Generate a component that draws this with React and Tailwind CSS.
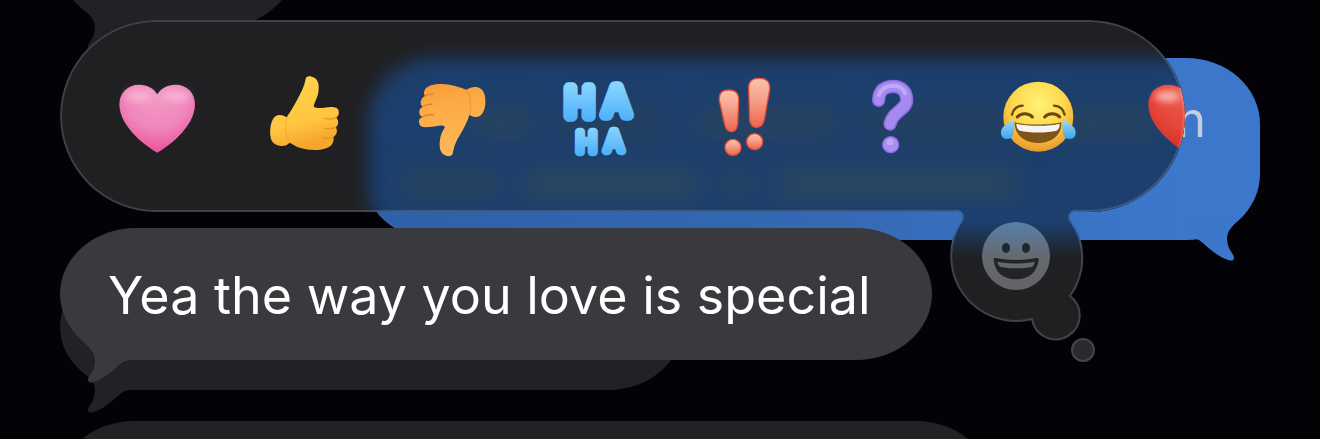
const fontStack = "font-['Inter','Liberation_Sans',sans-serif]"

const Tail = ({ className }) => (
  <svg viewBox="0 0 72 60" className={`absolute h-[60px] w-[72px] ${className}`} aria-hidden="true">
    <path
      fill="currentColor"
      d="M24 18C27 22 31 25 33 29C36 34 35 41 33 46C31 50 28 53 28 56C28 59 31 59 34 58C43 55 50 49 58 42C62 38 66 36 72 36V14H28Z"
    />
  </svg>
)

const DimBubble = ({ className }) => (
  <div className={`relative h-[126px] max-w-full shrink-0 rounded-[74px/63px] bg-[#222125] text-[#222125] ${className}`}>
    <Tail className="-bottom-6 left-0" />
  </div>
)

const Conversation = () => (
  <div className="absolute inset-0 flex flex-col overflow-hidden px-[60px]" aria-hidden="true">
    <DimBubble className="-mt-[99px] w-[235px]" />
    <div className="relative mt-[31px] h-[182px] w-[897px] max-w-full shrink-0 self-end rounded-[74px/66px] bg-linear-to-r from-[#2f62a9] from-10% via-[#3568b4] to-[#3c77cc] to-90% text-[#3c77cc]">
      <p className="px-[54px] pt-8 text-right text-[49px] leading-[60px] text-[#c3cde0]">n</p>
      <Tail className="-right-0.5 -bottom-[22px] -scale-x-100" />
    </div>
    <DimBubble className="mt-6 w-[622px]" />
    <DimBubble className="mt-[31px] w-[930px]" />
  </div>
)

const Heart = ({ id, light, mid, dark, shine }) => (
  <svg viewBox="210 225 225 246" className="size-full overflow-visible" aria-hidden="true">
    <defs>
      <radialGradient id={id} gradientUnits="userSpaceOnUse" cx="322" cy="290" r="175">
        <stop offset="0" stopColor={light} />
        <stop offset="0.55" stopColor={mid} />
        <stop offset="1" stopColor={dark} />
      </radialGradient>
      <filter id={`${id}-soft`} x="-50%" y="-80%" width="200%" height="260%">
        <feGaussianBlur stdDeviation="11" />
      </filter>
    </defs>
    <path
      fill={`url(#${id})`}
      d="M322 458C300 447 208 385 208 313C208 278 234 254 267 254C292 254 312 266 322 283C332 266 352 254 377 254C410 254 435 278 435 313C435 385 344 447 322 458Z"
    />
    <ellipse cx="266" cy="289" rx="38" ry="17" fill={shine} filter={`url(#${id}-soft)`} />
    <ellipse cx="378" cy="289" rx="38" ry="17" fill={shine} filter={`url(#${id}-soft)`} />
  </svg>
)

const ThumbUp = () => (
  <svg viewBox="50 30 225 246" className="size-full overflow-visible" aria-hidden="true">
    <defs>
      <linearGradient id="up" x1="0" y1="0" x2="0.25" y2="1">
        <stop offset="0" stopColor="#ffd34b" />
        <stop offset="0.7" stopColor="#ffc640" />
        <stop offset="1" stopColor="#f5a62d" />
      </linearGradient>
    </defs>
    <path
      fill="url(#up)"
      d="M166 41C169 30 183 33 192 38C205 46 207 62 204 82C201 101 192 111 190 125C196 130 210 129 222 128C238 126 262 123 265 138C267 148 264 154 257 158C267 165 265 182 256 187C263 195 260 211 249 216C253 229 245 243 231 248C212 257 176 257 151 249C137 245 127 238 118 233C111 241 97 246 82 241C60 236 58 210 60 190C63 164 72 151 87 150C98 150 104 154 109 157C121 140 132 121 143 100C153 81 163 61 166 41Z"
    />
    <g fill="none" stroke="#df8b1f" strokeWidth="4" strokeLinecap="round" opacity="0.75">
      <path d="M224 160C236 163 250 162 258 157" />
      <path d="M222 190C236 192 248 191 256 187" />
      <path d="M219 218C230 221 241 220 249 216" />
      <path d="M109 158C103 180 105 211 118 232" opacity="0.4" />
    </g>
  </svg>
)

const ThumbDown = () => (
  <svg viewBox="162 105 225 246" className="size-full overflow-visible" aria-hidden="true">
    <defs>
      <linearGradient id="down" x1="0" y1="0" x2="0.2" y2="1">
        <stop offset="0" stopColor="#f79a35" />
        <stop offset="0.3" stopColor="#fba945" />
        <stop offset="1" stopColor="#ffb755" />
      </linearGradient>
    </defs>
    <path
      fill="url(#down)"
      d="M194 151C200 136 222 132 244 132C272 133 294 140 319 149C330 142 348 137 360 145C375 154 377 174 376 191C374 213 366 230 347 231C339 231 332 227 328 225C322 245 310 269 298 288C283 312 282 325 278 341C274 352 258 349 249 342C237 333 237 309 242 289C245 275 252 269 255 260C244 252 231 259 216 260C199 262 181 264 178 251C175 240 179 234 188 231C174 226 174 206 188 201C178 193 181 174 195 168C191 162 191 156 194 151Z"
    />
    <g fill="none" stroke="#d97b24" strokeWidth="4" strokeLinecap="round" opacity="0.8">
      <path d="M195 168C202 164 210 161 219 162" />
      <path d="M188 200C196 194 206 192 216 193" />
      <path d="M187 231C196 225 208 223 220 225" />
      <path d="M320 150C331 166 336 202 328 224" opacity="0.4" />
    </g>
  </svg>
)

const HaHa = () => (
  <svg viewBox="603 105 225 246" className={`size-full overflow-visible ${fontStack}`} aria-hidden="true">
    <defs>
      <linearGradient id="haha-top" gradientUnits="userSpaceOnUse" x1="0" y1="122" x2="0" y2="248">
        <stop offset="0" stopColor="#8ed8ff" />
        <stop offset="1" stopColor="#4aaefb" />
      </linearGradient>
      <linearGradient id="haha-low" gradientUnits="userSpaceOnUse" x1="0" y1="252" x2="0" y2="348">
        <stop offset="0" stopColor="#8ed8ff" />
        <stop offset="1" stopColor="#4aaefb" />
      </linearGradient>
    </defs>
    <g textAnchor="middle" fontWeight="300" strokeLinejoin="round" strokeLinecap="round">
      <g fill="url(#haha-top)" stroke="url(#haha-top)" strokeWidth="35" fontSize="114">
        <text x="659" y="227">H</text>
        <text x="770" y="224">A</text>
      </g>
      <g fill="url(#haha-low)" stroke="url(#haha-low)" strokeWidth="25" fontSize="80">
        <text x="679" y="335">H</text>
        <text x="762" y="334">A</text>
      </g>
    </g>
  </svg>
)

const Exclaim = () => (
  <svg viewBox="144 105 225 246" className="size-full overflow-visible" aria-hidden="true">
    <defs>
      <linearGradient id="bang" x1="0" y1="0" x2="0" y2="1">
        <stop offset="0" stopColor="#fbc3ad" />
        <stop offset="0.4" stopColor="#f5a48e" />
        <stop offset="1" stopColor="#f0654c" />
      </linearGradient>
    </defs>
    <g fill="url(#bang)" stroke="#e34f3b" strokeWidth="4">
      <path d="M178 182C176 160 186 150 206 150C228 150 237 161 236 183L233 250C231 268 225 275 215 275C204 275 197 268 194 252Z" />
      <path d="M266 147C265 124 276 115 298 115C322 115 331 128 329 149L313 238C309 255 302 262 290 262C277 262 271 254 269 239Z" />
      <circle cx="219" cy="322" r="24" />
      <circle cx="284" cy="305" r="24" />
    </g>
  </svg>
)

const Question = () => (
  <svg viewBox="585 105 225 246" className="size-full overflow-visible" aria-hidden="true">
    <g fill="none" strokeLinecap="round">
      <path stroke="#8b6be3" strokeWidth="40" d="M656 181C656 150 675 139 700 139C725 139 740 155 740 180C740 210 697 214 690 252" />
      <path stroke="#a58bf0" strokeWidth="31" d="M656 181C656 150 675 139 700 139C725 139 740 155 740 180C740 210 697 214 690 252" />
      <path stroke="#cbb6fb" strokeWidth="12" d="M657 165C664 142 680 137 700 137C718 137 730 145 735 160" opacity="0.7" />
    </g>
    <circle cx="692" cy="314" r="24" fill="#aa8ff2" stroke="#8b6be3" strokeWidth="4" />
    <circle cx="690" cy="306" r="10" fill="#c9b5fb" opacity="0.7" />
  </svg>
)

const Joy = () => (
  <svg viewBox="186 105 225 246" className="size-full overflow-visible" aria-hidden="true">
    <defs>
      <radialGradient id="joy" cx="0.5" cy="0.32" r="0.68">
        <stop offset="0" stopColor="#fff279" />
        <stop offset="0.55" stopColor="#fcd84b" />
        <stop offset="0.85" stopColor="#f2ad37" />
        <stop offset="1" stopColor="#e69a2e" />
      </radialGradient>
      <linearGradient id="tear" x1="0" y1="0" x2="0" y2="1">
        <stop offset="0" stopColor="#a3dcf5" />
        <stop offset="1" stopColor="#3ba4e8" />
      </linearGradient>
    </defs>
    <circle cx="295" cy="230" r="105" fill="url(#joy)" />
    <g fill="none" stroke="#6f4514" strokeWidth="7" strokeLinecap="round">
      <path d="M216 224C220 207 232 198 248 197" />
      <path d="M342 197C358 198 370 207 374 224" />
      <path d="M232 231C243 218 266 218 277 231" strokeWidth="9" />
      <path d="M314 231C325 218 348 218 359 231" strokeWidth="9" />
    </g>
    <path fill="#7f5418" d="M224 247C260 256 330 256 364 247C366 284 337 309 294 309C252 309 223 284 224 247Z" />
    <path fill="#f4f4f4" d="M229 251C264 259 326 259 359 251C360 261 356 268 350 272C320 279 270 279 239 272C232 268 229 260 229 251Z" />
    <g fill="url(#tear)">
      <path d="M220 237C206 248 184 258 183 277C182 290 191 298 203 297C216 296 221 286 222 272C223 258 223 246 220 237Z" />
      <path d="M370 237C384 248 406 258 407 277C408 290 399 298 387 297C374 296 369 286 368 272C367 258 367 246 370 237Z" />
    </g>
  </svg>
)

const reactions = [
  {
    name: 'Love',
    icon: <Heart id="pink" light="#f39ac6" mid="#f086bd" dark="#ec4b92" shine="#f7b2d2" />,
  },
  { name: 'Like', icon: <ThumbUp /> },
  { name: 'Dislike', icon: <ThumbDown /> },
  { name: 'Laugh', icon: <HaHa /> },
  { name: 'Emphasize', icon: <Exclaim /> },
  { name: 'Question', icon: <Question /> },
  { name: 'Tears of joy', icon: <Joy /> },
  {
    name: 'Red heart',
    icon: <Heart id="red" light="#ec5a4c" mid="#e5453b" dark="#cf2a24" shine="#f8b3ac" />,
  },
]

// The small thought bubble that hangs below the bar and opens the emoji keyboard
const MoreEmoji = () => (
  <div className="absolute top-[188px] right-[85px] h-40 w-[155px]">
    <svg viewBox="0 0 155 160" className="size-full" aria-hidden="true">
      <defs>
        <linearGradient id="glass" gradientUnits="userSpaceOnUse" x1="0" y1="14" x2="0" y2="50">
          <stop offset="0" stopColor="#1c3f6d" />
          <stop offset="1" stopColor="#202022" />
        </linearGradient>
        <linearGradient id="rim" gradientUnits="userSpaceOnUse" x1="0" y1="20" x2="0" y2="44">
          <stop offset="0" stopColor="#3467a8" />
          <stop offset="1" stopColor="#434346" />
        </linearGradient>
      </defs>
      <path
        fill="url(#glass)"
        d="M11 3C16 3 19 6 17 12A65 65 0 0 0 87 111A24 24 0 1 0 125 88A65 65 0 0 0 125 12C123 7 126 3 131 3V0H11Z"
      />
      <path
        fill="none"
        stroke="url(#rim)"
        strokeWidth="2"
        d="M11 3C16 3 19 6 17 12A65 65 0 0 0 87 111A24 24 0 1 0 125 88A65 65 0 0 0 125 12C123 7 126 3 131 3"
      />
      <circle cx="138" cy="142" r="11" fill="#2a2a2c" stroke="#454548" strokeWidth="2" />
    </svg>
    <button type="button" aria-label="More emoji" className="absolute top-3.5 left-[37px] size-[68px] rounded-full">
      <svg viewBox="0 0 204 204" className="size-full" aria-hidden="true">
        <defs>
          <linearGradient id="face" x1="0" y1="0" x2="0" y2="1">
            <stop offset="0" stopColor="#567fac" />
            <stop offset="0.5" stopColor="#656a70" />
            <stop offset="1" stopColor="#636365" />
          </linearGradient>
        </defs>
        <circle cx="102" cy="102" r="102" fill="url(#face)" />
        <ellipse cx="72" cy="78" rx="12" ry="15" fill="#20262e" />
        <ellipse cx="132" cy="78" rx="12" ry="15" fill="#20262e" />
        <path fill="#232427" d="M35 113C34 108 37 107 42 108C78 116 126 116 162 108C168 107 171 109 170 114C166 150 140 172 102 172C64 172 38 150 35 113Z" />
        <path fill="#67686a" d="M47 119C80 126 124 126 158 119C157 127 154 132 150 134C120 140 84 140 55 134C50 131 47 126 47 119Z" />
      </svg>
    </button>
  </div>
)

const ReactionBar = () => (
  <div className="relative mr-[75px]">
    <div className="relative flex h-48 items-center gap-[72px] overflow-hidden rounded-full bg-[#202022] pl-[60px]">
      {/* tint of the messages showing through the glass */}
      <div className="absolute top-[38px] -right-20 -bottom-10 left-[308px] rounded-[66px] bg-[#1c3f6d] blur-[9px]" />
      <div className="absolute top-[88px] left-[410px] flex gap-6 blur-[12px]">
        <div className="h-8 w-16 bg-[#28435f]" />
        <div className="h-8 w-28 bg-[#24405f]" />
        <div className="h-8 w-36 bg-[#28435f]" />
        <div className="h-8 w-44 bg-[#24405f]" />
        <div className="h-8 w-24 bg-[#28435f]" />
      </div>
      <div className="absolute top-[148px] left-[344px] flex gap-6 blur-[12px]">
        <div className="h-8 w-24 bg-[#28435f]" />
        <div className="h-8 w-44 bg-[#2c4660]" />
        <div className="h-8 w-7 bg-[#28435f]" />
        <div className="h-8 w-60 bg-[#2c4660]" />
      </div>
      {reactions.map((reaction) => (
        <button
          key={reaction.name}
          type="button"
          aria-label={reaction.name}
          className="relative h-[82px] w-[75px] shrink-0"
        >
          {reaction.icon}
        </button>
      ))}
      <div className="pointer-events-none absolute inset-0 rounded-full border-2 border-white/15" />
    </div>
    <MoreEmoji />
  </div>
)

export default function App() {
  return (
    <main className={`relative min-h-screen overflow-hidden bg-[#030207] ${fontStack}`}>
      <Conversation />
      <div className="relative flex flex-col gap-4 px-[60px] pt-5 pb-8">
        <ReactionBar />
        <div className="relative flex h-[132px] w-[872px] max-w-full items-center rounded-[76px/66px] bg-[#3a393d] px-12 pt-1 text-[#3a393d]">
          <Tail className="-bottom-6 left-0" />
          <p className="relative text-[52px] leading-[64px] whitespace-nowrap text-white">
            Yea the way you love is special
          </p>
        </div>
      </div>
    </main>
  )
}
